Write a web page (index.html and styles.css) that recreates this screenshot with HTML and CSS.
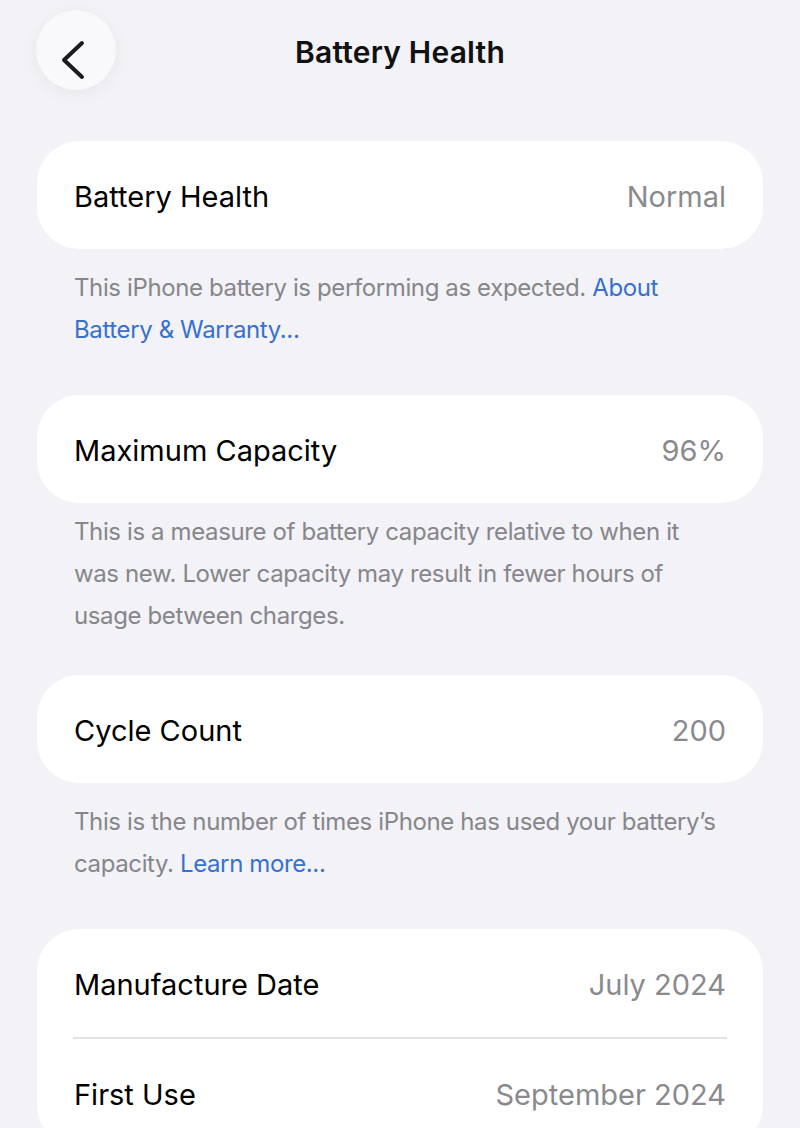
FILE: index.html
```html
<!DOCTYPE html>
<html lang="en">
<head>
<meta charset="utf-8">
<title>Battery Health</title>
<link rel="stylesheet" href="styles.css">
</head>
<body>
<header class="nav">
  <div class="nav-left">
    <button class="back" aria-label="Back">
      <svg width="80" height="80" viewBox="0 0 80 80"><path d="M46 34 L28 51 L46 68" transform="translate(0,-1)" fill="none" stroke="#1c1c1e" stroke-width="4" stroke-linecap="round" stroke-linejoin="round"/></svg>
    </button>
  </div>
  <h1 class="nav-title">Battery Health</h1>
  <div class="nav-right"></div>
</header>

<main class="content">
  <section class="group">
    <div class="card">
      <div class="row"><span class="label">Battery Health</span><span class="value">Normal</span></div>
    </div>
    <p class="footer">This iPhone battery is performing as expected. <a class="link">About<br>Battery &amp; Warranty...</a></p>
  </section>

  <section class="group group-tight">
    <div class="card">
      <div class="row"><span class="label">Maximum Capacity</span><span class="value">96%</span></div>
    </div>
    <p class="footer">This is a measure of battery capacity relative to when it<br>was new. Lower capacity may result in fewer hours of<br>usage between charges.</p>
  </section>

  <section class="group">
    <div class="card">
      <div class="row"><span class="label">Cycle Count</span><span class="value">200</span></div>
    </div>
    <p class="footer">This is the number of times iPhone has used your battery’s<br>capacity. <a class="link">Learn more...</a></p>
  </section>

  <section class="group">
    <div class="card">
      <div class="row"><span class="label">Manufacture Date</span><span class="value">July 2024</span></div>
      <div class="sep"></div>
      <div class="row"><span class="label">First Use</span><span class="value">September 2024</span></div>
    </div>
  </section>
</main>
</body>
</html>
```

FILE: styles.css
```css
* { box-sizing: border-box; }
html, body {
  margin: 0;
  padding: 0;
  background: #f2f2f7;
  font-family: Inter, "Noto Sans", "Liberation Sans", sans-serif;
  color: #000;
  height: 1128px;
  overflow: hidden;
}
.nav {
  display: grid;
  grid-template-columns: 1fr auto 1fr;
  align-items: center;
  padding-top: 10px;
  height: 90px;
}
.nav-left { padding-left: 36px; }
.back {
  width: 80px;
  height: 80px;
  border-radius: 50%;
  border: none;
  padding: 0;
  background: #f9f9fb;
  box-shadow: 0 4px 18px rgba(0,0,0,0.05);
  display: block;
}
.back svg { display: block; }
.nav-title {
  margin: 0;
  font-size: 30px;
  font-weight: 600;
  letter-spacing: 0.2px;
  color: #111;
  transform: translateY(2px);
}
.content { padding: 51px 37px 0; }
.group { margin-bottom: 44px; }
.group-tight { margin-bottom: 38px; }
.card {
  background: #fff;
  border-radius: 42px;
  overflow: hidden;
}
.row {
  height: 108px;
  padding: 0 37px;
  display: flex;
  align-items: center;
  justify-content: space-between;
  font-size: 29px;
  letter-spacing: 0;
  padding-top: 2px;
  white-space: nowrap;
}
.label { color: #000; }
.value { color: #8a8a8e; }
.sep {
  height: 2px;
  background: #e3e3e7;
  margin: 0 36px;
}
.footer {
  margin: 0;
  padding: 18px 37px 0;
  font-size: 24px;
  line-height: 42px;
  color: #86868b;
  letter-spacing: -0.38px;
  white-space: nowrap;
}
.group-tight .footer { padding-top: 8px; }
.link { color: #3871c9; }
```
